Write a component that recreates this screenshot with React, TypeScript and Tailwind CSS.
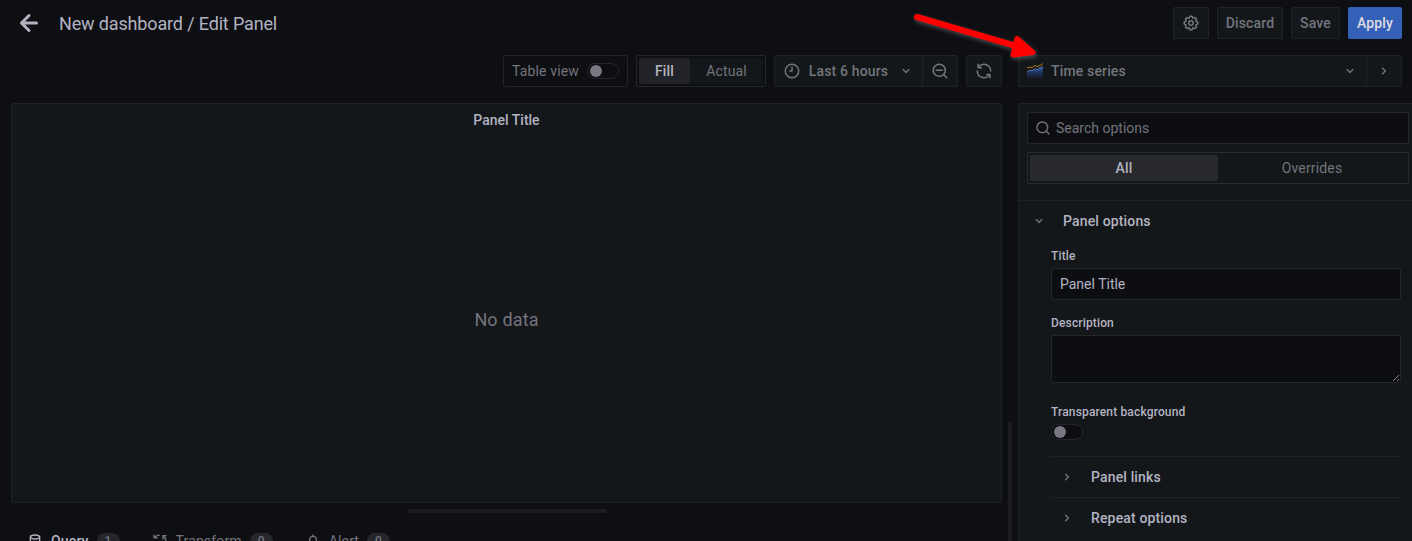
import type { ReactNode } from "react";

const icons = {
  arrowLeft:
    "M17,11H9.41l3.3-3.29a1,1,0,1,0-1.42-1.42l-5,5a1,1,0,0,0-.21.33,1,1,0,0,0,0,.76,1,1,0,0,0,.21.33l5,5a1,1,0,0,0,1.42,0,1,1,0,0,0,0-1.42L9.41,13H17a1,1,0,0,0,0-2Z",
  angleDown:
    "M17,9.17a1,1,0,0,0-1.41,0L12,12.71,8.46,9.17a1,1,0,0,0-1.41,0,1,1,0,0,0,0,1.42l4.24,4.24a1,1,0,0,0,1.42,0L17,10.59A1,1,0,0,0,17,9.17Z",
  angleRight:
    "M14.83,11.29,10.59,7.05a1,1,0,0,0-1.42,0,1,1,0,0,0,0,1.41L12.71,12,9.17,15.54a1,1,0,0,0,0,1.41,1,1,0,0,0,.71.29,1,1,0,0,0,.71-.29l4.24-4.24A1,1,0,0,0,14.83,11.29Z",
  clock:
    "M12,2A10,10,0,1,0,22,12,10,10,0,0,0,12,2Zm0,18a8,8,0,1,1,8-8A8,8,0,0,1,12,20ZM12,6a1,1,0,0,0-1,1v4H9a1,1,0,0,0,0,2h3a1,1,0,0,0,1-1V7A1,1,0,0,0,12,6Z",
  searchMinus:
    "M21.71,20.29,18,16.61A9,9,0,1,0,16.61,18l3.68,3.68a1,1,0,0,0,1.42,0A1,1,0,0,0,21.71,20.29ZM11,18a7,7,0,1,1,7-7A7,7,0,0,1,11,18Zm4-8H7a1,1,0,0,0,0,2h8a1,1,0,0,0,0-2Z",
  search:
    "M21.71,20.29,18,16.61A9,9,0,1,0,16.61,18l3.68,3.68a1,1,0,0,0,1.42,0A1,1,0,0,0,21.71,20.29ZM11,18a7,7,0,1,1,7-7A7,7,0,0,1,11,18Z",
  sync: "M19.91,15.51H15.38a1,1,0,0,0,0,2h2.4A8,8,0,0,1,4,12a1,1,0,1,0-2,0,10,10,0,0,0,16.88,7.23V21a1,1,0,0,0,2,0V16.5A1,1,0,0,0,19.91,15.51ZM12,2A10,10,0,0,0,5.12,4.77V3a1,1,0,0,0-2,0V7.5a1,1,0,0,0,1,1h4.5a1,1,0,0,0,0-2H6.22A8,8,0,0,1,20,12a1,1,0,0,0,2,0A10,10,0,0,0,12,2Z",
  cog: "M21.32,9.55l-1.89-.63.89-1.78A1,1,0,0,0,20.13,6L18,3.87a1,1,0,0,0-1.15-.19l-1.78.89-.63-1.89A1,1,0,0,0,13.5,2h-3a1,1,0,0,0-.95.68L8.92,4.57,7.14,3.68A1,1,0,0,0,6,3.87L3.87,6a1,1,0,0,0-.19,1.15l.89,1.78-1.89.63A1,1,0,0,0,2,10.5v3a1,1,0,0,0,.68.95l1.89.63-.89,1.78A1,1,0,0,0,3.87,18L6,20.13a1,1,0,0,0,1.15.19l1.78-.89.63,1.89a1,1,0,0,0,.95.68h3a1,1,0,0,0,.95-.68l.63-1.89,1.78.89A1,1,0,0,0,18,20.13L20.13,18a1,1,0,0,0,.19-1.15l-.89-1.78,1.89-.63A1,1,0,0,0,22,13.5v-3A1,1,0,0,0,21.32,9.55ZM20,12.78l-1.2.4A2,2,0,0,0,17.64,16l.57,1.14-1.1,1.1L16,17.64a2,2,0,0,0-2.79,1.16l-.4,1.2H11.22l-.4-1.2A2,2,0,0,0,8,17.64l-1.14.57-1.1-1.1L6.36,16A2,2,0,0,0,5.2,13.18L4,12.78V11.22l1.2-.4A2,2,0,0,0,6.36,8L5.79,6.89l1.1-1.1L8,6.36A2,2,0,0,0,10.82,5.2l.4-1.2h1.56l.4,1.2A2,2,0,0,0,16,6.36l1.14-.57,1.1,1.1L17.64,8a2,2,0,0,0,1.16,2.79l1.2.4ZM12,8a4,4,0,1,0,4,4A4,4,0,0,0,12,8Zm0,6a2,2,0,1,1,2-2A2,2,0,0,1,12,14Z",
  database:
    "M12,2C8,2,4,3.37,4,6V18c0,2.63,4,4,8,4s8-1.37,8-4V6C20,3.37,16,2,12,2Zm6,16c0,.71-2.28,2-6,2s-6-1.29-6-2V14.73A13.16,13.16,0,0,0,12,16a13.16,13.16,0,0,0,6-1.27Zm0-6c0,.71-2.28,2-6,2s-6-1.29-6-2V8.73A13.16,13.16,0,0,0,12,10a13.16,13.16,0,0,0,6-1.27ZM12,8C8.28,8,6,6.71,6,6s2.28-2,6-2,6,1.29,6,2S15.72,8,12,8Z",
  bell: "M18,13.18V10a6,6,0,0,0-5-5.91V3a1,1,0,0,0-2,0V4.09A6,6,0,0,0,6,10v3.18A3,3,0,0,0,4,16v2a1,1,0,0,0,1,1H8.14a4,4,0,0,0,7.72,0H19a1,1,0,0,0,1-1V16A3,3,0,0,0,18,13.18ZM8,10a4,4,0,0,1,8,0v3H8Zm4,10a2,2,0,0,1-1.72-1h3.44A2,2,0,0,1,12,20Zm6-3H6V16a1,1,0,0,1,1-1H17a1,1,0,0,1,1,1Z",
  process:
    "M2,3a1,1,0,0,1,2,0V5A10.500,10.500,0,0,1,11,2.300a1,1,0,0,1,.1,2A8.500,8.500,0,0,0,5.700,6.200H8a1,1,0,0,1,0,2H3A1,1,0,0,1,2,7.200ZM15.500,3H21a1,1,0,0,1,0,2H19.200A10,10,0,0,1,22,11a1,1,0,0,1-2,.2A8,8,0,0,0,17.500,6.300V9a1,1,0,0,1-2,0ZM2,13a1,1,0,0,1,2-.2A8,8,0,0,0,6.500,17.700V15a1,1,0,0,1,2,0v6H3a1,1,0,0,1,0-2H4.800A10,10,0,0,1,2,13Z",
};

function Icon({ name, className = "size-4" }: { name: keyof typeof icons; className?: string }) {
  return (
    <svg viewBox="0 0 24 24" className={`shrink-0 fill-current ${className}`} aria-hidden="true">
      <path d={icons[name]} />
    </svg>
  );
}

function ToolButton({ children, className = "" }: { children: ReactNode; className?: string }) {
  return (
    <button
      className={`flex h-8 shrink-0 items-center justify-center rounded-[2px] border border-[#202226] bg-[#141719] font-medium text-[#73747e] ${className}`}
    >
      {children}
    </button>
  );
}

function Toggle() {
  return (
    <span className="flex h-4 w-8 shrink-0 items-center rounded-full border border-[#25262b] bg-[#0d0e12] pl-0.5">
      <span className="size-3 rounded-full bg-[#787883]" />
    </span>
  );
}

function TimeSeriesLogo() {
  return (
    <svg viewBox="0 0 16 16" className="size-4 shrink-0" aria-hidden="true">
      <defs>
        <linearGradient id="area" x1="0" y1="0" x2="0" y2="1">
          <stop offset="0" stopColor="#3562b5" />
          <stop offset="1" stopColor="#14204a" stopOpacity="0.35" />
        </linearGradient>
      </defs>
      <path d="M0 9.500 3 7.500l2 .5 3-2 2 1 3-2.500 1 .5 2-1.500v12H0Z" fill="url(#area)" />
      <path d="m0 9 3-2 2 .8 3-2.300 2 1.500 3-2.500 1 .5 2-1.500" fill="none" stroke="#6a8ac4" strokeWidth=".8" />
      <path d="m0 4.800 3-.8 2 .8 3-2.500 2 1.700 3-2 1 .3 2-1.800" fill="none" stroke="#b57a16" strokeWidth="1" />
    </svg>
  );
}

function Header() {
  return (
    <header className="flex h-[39px] items-end gap-2">
      <div className="flex h-8 flex-1 items-center pl-[11px]">
        <Icon name="arrowLeft" className="size-9 text-[#b3b3c1]" />
        <h1 className="pt-0.5 pl-3 text-[18px] tracking-[-0.15px] text-[#b3b3c1]">New dashboard / Edit Panel</h1>
      </div>
      <ToolButton className="w-9">
        <Icon name="cog" className="size-[18px]" />
      </ToolButton>
      <ToolButton className="w-[66px]">Discard</ToolButton>
      <ToolButton className="w-[49px]">Save</ToolButton>
      <button className="mr-2.5 h-8 w-[54px] shrink-0 rounded-[2px] bg-[#3560b8] font-medium text-[#dcdce0]">
        Apply
      </button>
    </header>
  );
}

function Toolbar() {
  return (
    <div className="flex h-8 justify-end gap-2">
      <label className="flex w-[125px] items-center justify-between rounded-[2px] border border-[#222428] pr-2 pl-2 text-[#73747e]">
        Table view <Toggle />
      </label>
      <div className="flex w-[130px] rounded-[2px] border border-[#25262b] p-0.5">
        <button className="w-[51px] rounded-[2px] bg-[#222328] font-medium text-[#b3b3c1]">Fill</button>
        <button className="flex-1 rounded-[2px] bg-[#141719] text-[#73747e]">Actual</button>
      </div>
      <div className="flex">
        <ToolButton className="w-[149px] rounded-r-none">
          <Icon name="clock" className="size-[18px]" />
          <span className="pr-[10px] pl-2">Last 6 hours</span>
          <Icon name="angleDown" />
        </ToolButton>
        <ToolButton className="-ml-px w-9 rounded-l-none">
          <Icon name="searchMinus" className="size-[18px]" />
        </ToolButton>
      </div>
      <ToolButton className="w-9">
        <Icon name="sync" className="size-[18px]" />
      </ToolButton>
    </div>
  );
}

function Tab({ icon, label, count, active }: { icon: keyof typeof icons; label: string; count: number; active?: boolean }) {
  return (
    <div className={`flex items-center ${active ? "font-medium text-[#b3b3c1]" : "text-[#73747e]"}`}>
      <Icon name={icon} />
      <span className="pl-2">{label}</span>
      <span className="ml-2 flex h-4 w-[23px] items-center justify-center rounded-full bg-[#26272c] text-[12px] font-medium text-[#73747e]">
        {count}
      </span>
    </div>
  );
}

function Workspace() {
  return (
    <div className="flex w-[991px] flex-col">
      <Toolbar />
      <section className="mt-4 flex h-[400px] shrink-0 flex-col rounded-[2px] border border-[#202226] bg-[#141719]">
        <h2 className="flex h-8 items-center justify-center font-medium tracking-normal text-[#b3b3c1]">
          Panel Title
        </h2>
        <div className="flex flex-1 items-center justify-center pt-px text-[18px] text-[#73747e]">No data</div>
      </section>
      <div className="mx-auto mt-1.5 h-1 w-[200px] shrink-0 rounded-full bg-[#1b1c20]" />
      <div className="flex h-14 shrink-0 items-center gap-8 pl-4">
        <Tab icon="database" label="Query" count={1} active />
        <Tab icon="process" label="Transform" count={0} />
        <Tab icon="bell" label="Alert" count={0} />
      </div>
    </div>
  );
}

function CollapsedRow({ label }: { label: string }) {
  return (
    <div className="flex h-[41px] items-center border-t border-[#1f2225] pl-2 font-medium text-[#b3b3c1]">
      <Icon name="angleRight" className="size-4 text-[#73747e]" />
      <span className="pl-4">{label}</span>
    </div>
  );
}

function OptionsPane() {
  return (
    <aside className="flex w-[394px] flex-col">
      <div className="mr-2.5 flex">
        <ToolButton className="w-[349px] justify-start! rounded-r-none pr-2 pl-2">
          <TimeSeriesLogo />
          <span className="flex-1 pl-2 text-left">Time series</span>
          <Icon name="angleDown" />
        </ToolButton>
        <ToolButton className="-ml-px w-9 rounded-l-none">
          <Icon name="angleRight" />
        </ToolButton>
      </div>
      <div className="mt-4 flex-1 rounded-tl-[2px] border-t border-l border-[#202226] bg-[#141719]">
        <div className="pt-2 pr-[3px] pl-2">
          <div className="flex h-8 items-center rounded-[2px] border border-[#25262b] bg-[#0d0e12] pl-[7px] text-[#73747e]">
            <Icon name="search" />
            <span className="pl-[5px] tracking-normal">Search options</span>
          </div>
          <div className="mt-2 flex h-8 rounded-[2px] border border-[#292b2f] p-0.5">
            <button className="flex-1 rounded-[2px] bg-[#27292d] font-medium text-[#b3b3c1]">All</button>
            <button className="flex-1 text-[#73747e]">Overrides</button>
          </div>
        </div>
        <div className="mt-4 border-t border-[#1f2225]">
          <div className="flex h-10 items-center pl-3 font-medium text-[#b3b3c1]">
            <Icon name="angleDown" className="size-4 text-[#73747e]" />
            <span className="pl-4">Panel options</span>
          </div>
          <div className="flex w-[382px] flex-col pl-8">
            <label className="mt-[7px] h-4 text-[12px] leading-4 font-medium text-[#b3b3c1]">Title</label>
            <div className="mt-1 flex h-8 items-center rounded-[2px] border border-[#25262b] bg-[#0d0e12] pl-2 tracking-normal text-[#b3b3c1]">
              Panel Title
            </div>
            <label className="mt-[15px] h-4 text-[12px] leading-4 font-medium text-[#b3b3c1]">Description</label>
            <div className="mt-1 flex h-12 items-end justify-end rounded-[2px] border border-[#25262b] bg-[#0d0e12]">
              <svg viewBox="0 0 8 8" className="size-2 text-[#a7a7aa]" aria-hidden="true">
                <path d="m1 7 6-6M5 7l2-2" stroke="currentColor" strokeWidth=".8" />
              </svg>
            </div>
            <label className="mt-[21px] h-4 text-[12px] leading-4 font-medium text-[#b3b3c1]">
              Transparent background
            </label>
            <div className="mt-1 mb-4">
              <Toggle />
            </div>
            <CollapsedRow label="Panel links" />
            <CollapsedRow label="Repeat options" />
          </div>
        </div>
      </div>
    </aside>
  );
}

function PointerArrow() {
  return (
    <svg
      viewBox="0 0 140 60"
      className="pointer-events-none absolute top-[8px] left-[908px] h-[60px] w-[140px] drop-shadow-[1px_2px_2px_rgba(255,255,255,0.25)]"
      aria-hidden="true"
    >
      <path d="M9 9 108 38" stroke="#ff0000" strokeWidth="6" strokeLinecap="round" />
      <path d="m109 30.500 16 14-20 2.500Z" fill="#ff0000" stroke="#ff0000" strokeWidth="5" strokeLinejoin="round" />
    </svg>
  );
}

export default function App() {
  return (
    <div className="relative flex h-[541px] w-[1412px] flex-col overflow-hidden bg-[#0e0f13] font-[Roboto,sans-serif] text-[14px] leading-[22px] tracking-[0.01071em]">
      <Header />
      <main className="mt-4 flex min-h-0 flex-1 pl-[11px]">
        <Workspace />
        <div className="flex w-4 justify-center">
          <div className="mt-[366px] w-1 rounded-t-full bg-[#1b1c20]" />
        </div>
        <OptionsPane />
      </main>
      <PointerArrow />
    </div>
  );
}
